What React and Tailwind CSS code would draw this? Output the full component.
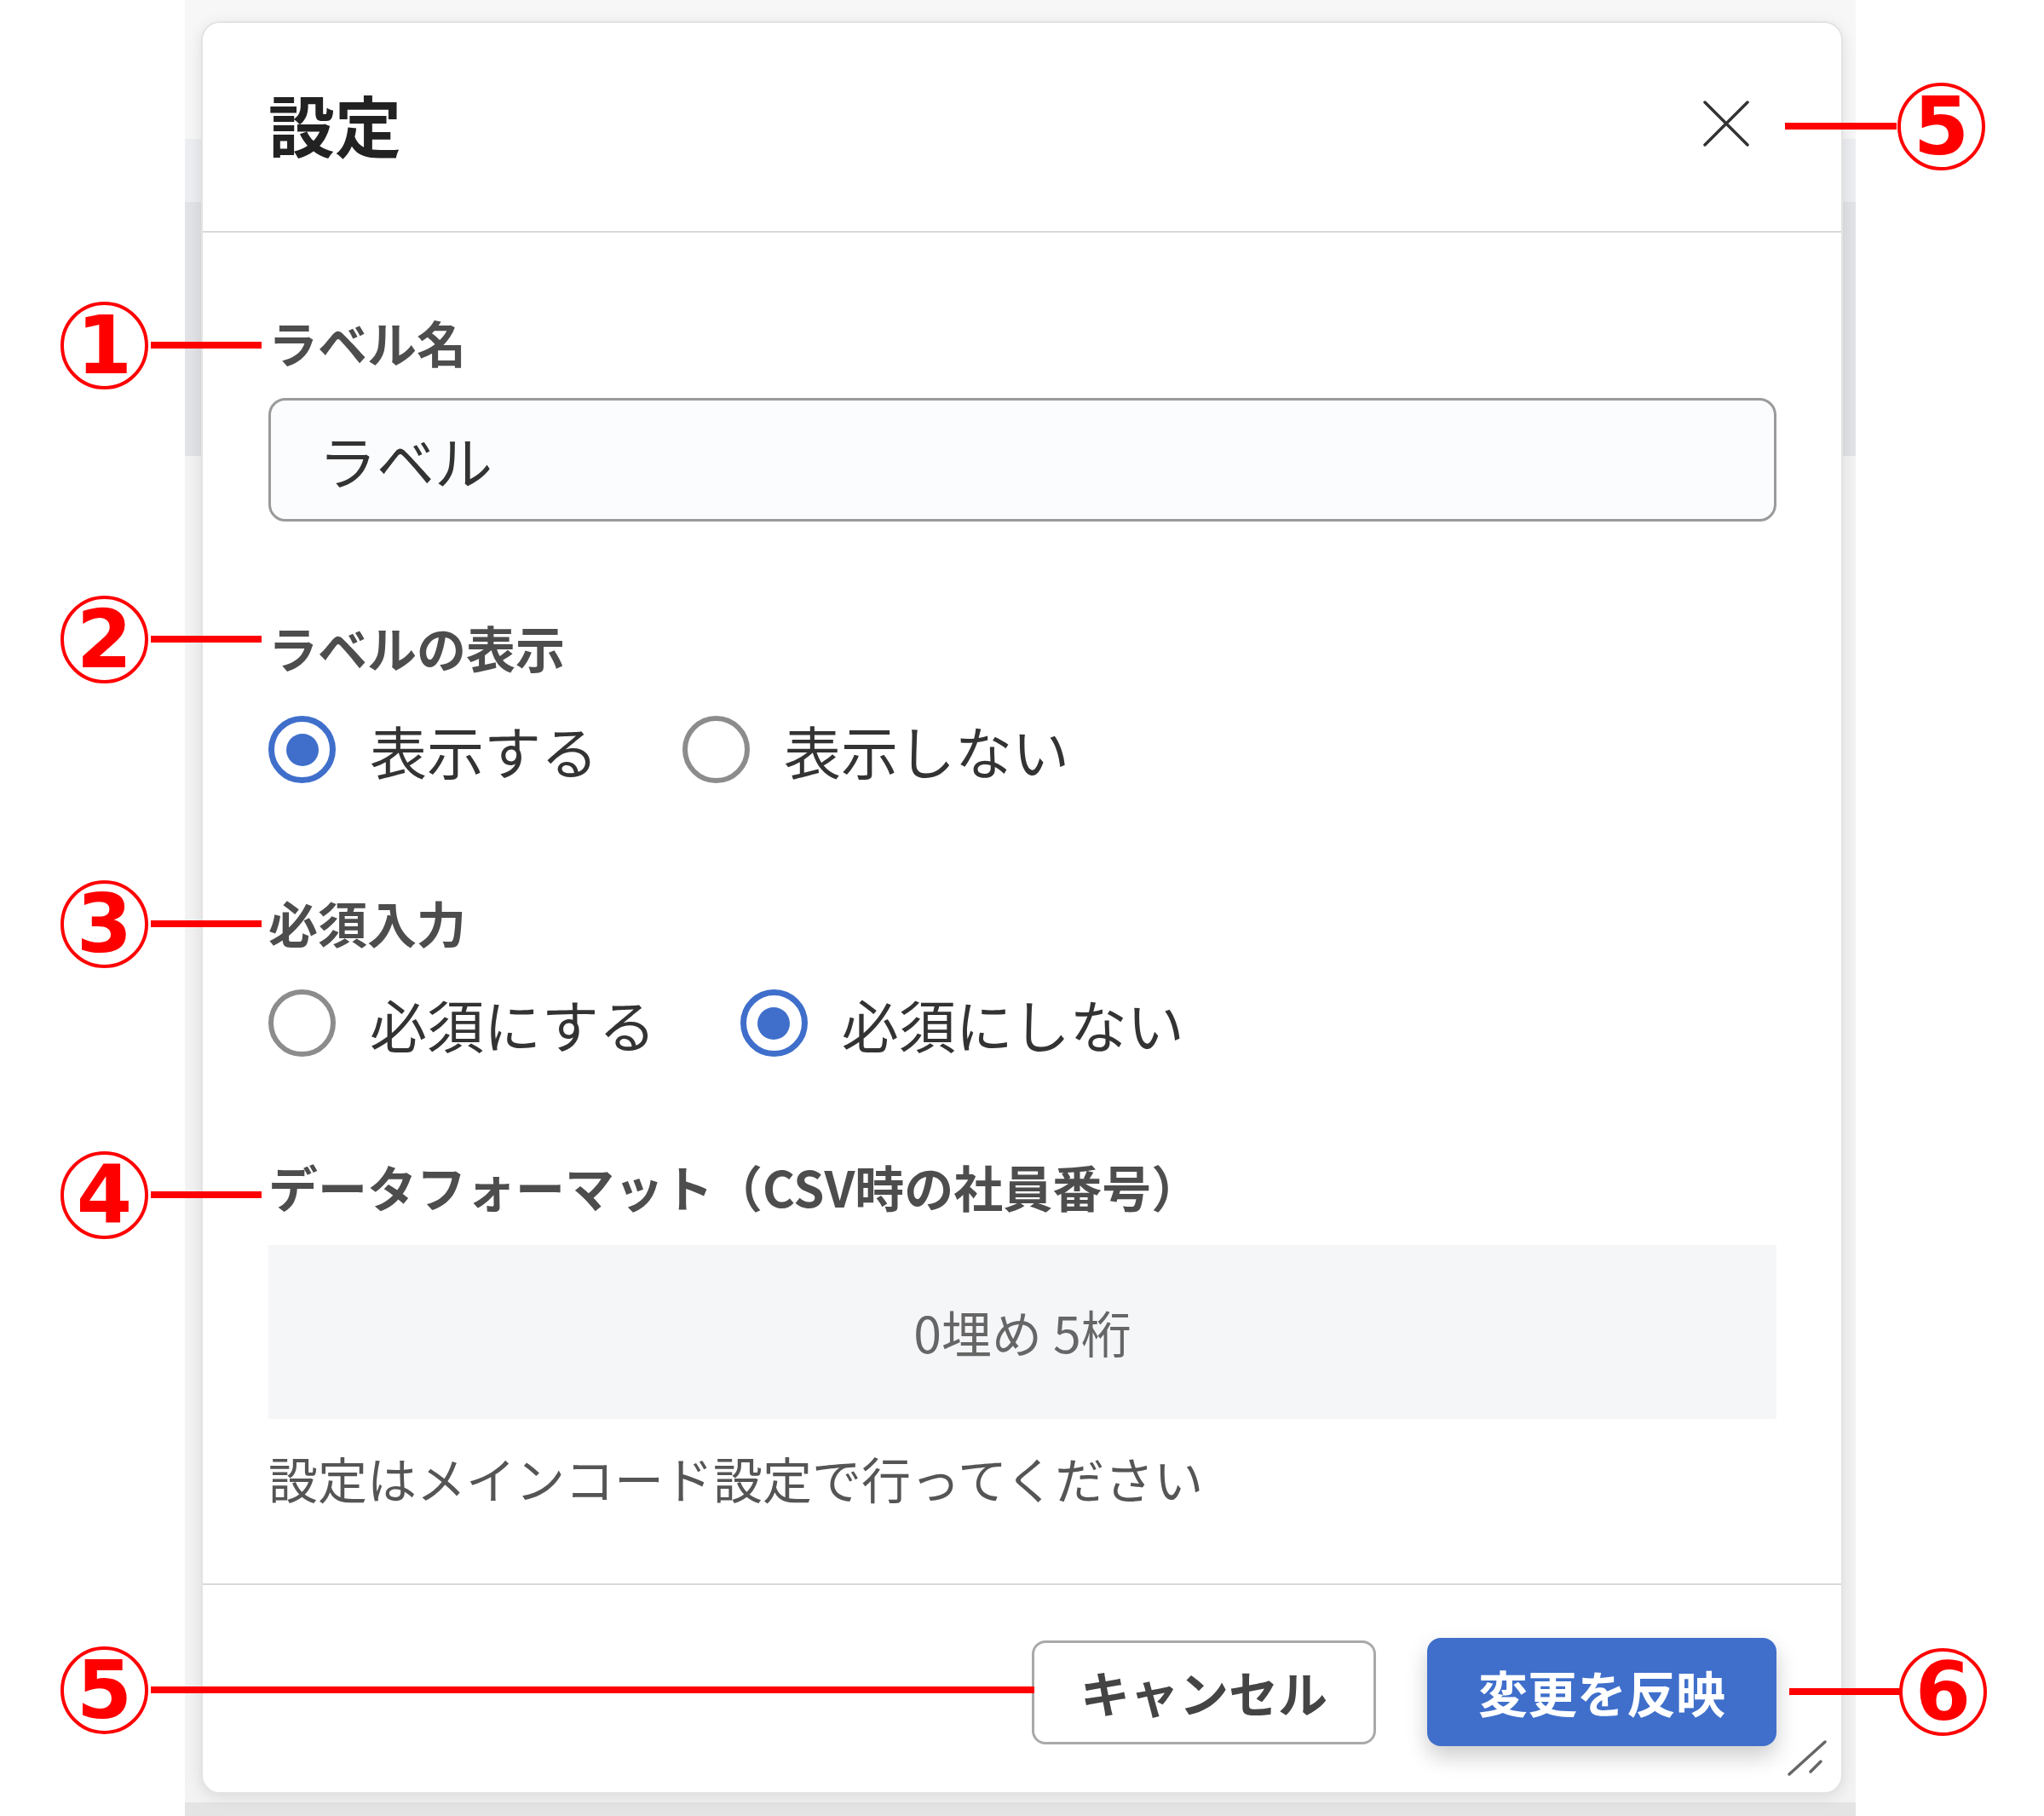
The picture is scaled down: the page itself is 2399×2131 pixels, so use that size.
import React from 'react';

const marks = [
  { n: '1', x: 122, y: 405, lx: 177, lw: 130 },
  { n: '2', x: 122, y: 750, lx: 177, lw: 130 },
  { n: '3', x: 122, y: 1084, lx: 177, lw: 130 },
  { n: '4', x: 122, y: 1402, lx: 177, lw: 130 },
  { n: '5', x: 122, y: 1983, lx: 177, lw: 1037 },
  { n: '5', x: 2278, y: 148, lx: 2095, lw: 131 },
  { n: '6', x: 2280, y: 1985, lx: 2100, lw: 131 },
];

function Radio({ checked }) {
  return checked ? (
    <span className="w-[79px] h-[79px] rounded-full border-[7px] border-[#3f6fcb] flex items-center justify-center shrink-0">
      <span className="w-[38px] h-[38px] rounded-full bg-[#3f6fcb]" />
    </span>
  ) : (
    <span className="w-[79px] h-[79px] rounded-full border-[6px] border-[#8c8c8c] shrink-0" />
  );
}

function Option({ checked, label }) {
  return (
    <label className="flex items-center gap-[40px]">
      <Radio checked={checked} />
      <span className="text-[67px] leading-none text-[#333]">{label}</span>
    </label>
  );
}

function FieldLabel({ children, className = '' }) {
  return <div className={`h-[80px] leading-[80px] text-[58px] font-bold text-[#4d4d4d] ${className}`}>{children}</div>;
}

export default function App() {
  return (
    <div className="relative w-[2399px] h-[2131px] bg-white overflow-hidden font-['Noto_Sans_CJK_JP',sans-serif]">
      {/* page behind the dialog */}
      <div className="ml-[217px] w-[1961px] h-full flex flex-col bg-[#f7f7f7]">
        <div className="h-[163px] bg-[#f7f7f7]" />
        <div className="h-[74px] bg-[#eceef1]" />
        <div className="h-[298px] bg-[#e1e3e7]" />
        <div className="flex-1 bg-[#f3f3f3]" />
        <div className="h-[16px] bg-[#e4e4e4]" />
      </div>

      {/* dialog */}
      <div className="absolute left-[236px] top-[25px] w-[1927px] h-[2080px] bg-white rounded-[22px] border-2 border-[#e3e3e3] shadow-[0_4px_18px_rgba(0,0,0,0.10)] flex flex-col">
        <div className="h-[246px] shrink-0 flex items-center justify-between pl-[77px] pr-[108px] border-b-2 border-[#d9dadd]">
          <h2 className="-mt-[9px] text-[78px] font-bold leading-none text-[#222]">設定</h2>
          <svg width="54" height="54" viewBox="0 0 54 54" className="-mt-[8px]">
            <path d="M2 2 L52 52 M52 2 L2 52" stroke="#333" strokeWidth="3.5" strokeLinecap="round" />
          </svg>
        </div>

        <div className="flex-1 flex flex-col pl-[77px] pr-[76px]">
          <FieldLabel className="mt-[88px]">ラベル名</FieldLabel>
          <div className="mt-[26px] h-[145px] rounded-[20px] border-[3px] border-[#9a9a9a] bg-[#fbfcfd] pl-[56px] flex items-center text-[68px] text-[#333]">
            ラベル
          </div>

          <FieldLabel className="mt-[107px]">ラベルの表示</FieldLabel>
          <div className="mt-[41px] flex items-center gap-[99px]">
            <Option checked label="表示する" />
            <Option label="表示しない" />
          </div>

          <FieldLabel className="mt-[123px]">必須入力</FieldLabel>
          <div className="mt-[39px] flex items-center gap-[99px]">
            <Option label="必須にする" />
            <Option checked label="必須にしない" />
          </div>

          <FieldLabel className="mt-[112px]">データフォーマット（CSV時の社員番号）</FieldLabel>
          <div className="mt-[29px] h-[204px] bg-[#f5f6f8] flex items-center justify-center text-[59px] text-[#666]">
            0埋め 5桁
          </div>
          <p className="mt-[29px] h-[80px] leading-[80px] text-[58px] text-[#555]">設定はメインコード設定で行ってください</p>
        </div>

        <div className="h-[245px] shrink-0 border-t-2 border-[#d9dadd] flex items-center justify-end gap-[60px] pr-[76px] pt-[8px]">
          <button className="w-[404px] h-[122px] rounded-[16px] border-[3px] border-[#a9a9a9] bg-white text-[58px] font-bold text-[#444]">
            キャンセル
          </button>
          <button className="w-[410px] h-[127px] rounded-[16px] bg-[#3f6fcb] text-white text-[58px] font-bold shadow-[0_12px_26px_rgba(0,0,0,0.2)]">
            変更を反映
          </button>
        </div>

        <svg width="55" height="55" viewBox="0 0 55 55" className="absolute left-[1855px] top-[2010px]">
          <path d="M7 45 L49 7 M32 42 L44 30" stroke="#666" strokeWidth="3.5" strokeLinecap="round" />
        </svg>
      </div>

      {/* annotations */}
      {marks.map((m, i) => (
        <React.Fragment key={i}>
          <div
            className="absolute h-[8px] bg-[#ff0000]"
            style={{ left: m.lx, top: m.y - 4, width: m.lw }}
          />
          <div
            className="absolute w-[103px] h-[103px] rounded-full border-[4px] border-[#ff0000] flex items-center justify-center"
            style={{ left: m.x - 51, top: m.y - 51 }}
          >
            <span className="font-['DejaVu_Sans',sans-serif] font-bold text-[94px] leading-none text-[#ff0000]">{m.n}</span>
          </div>
        </React.Fragment>
      ))}
    </div>
  );
}
